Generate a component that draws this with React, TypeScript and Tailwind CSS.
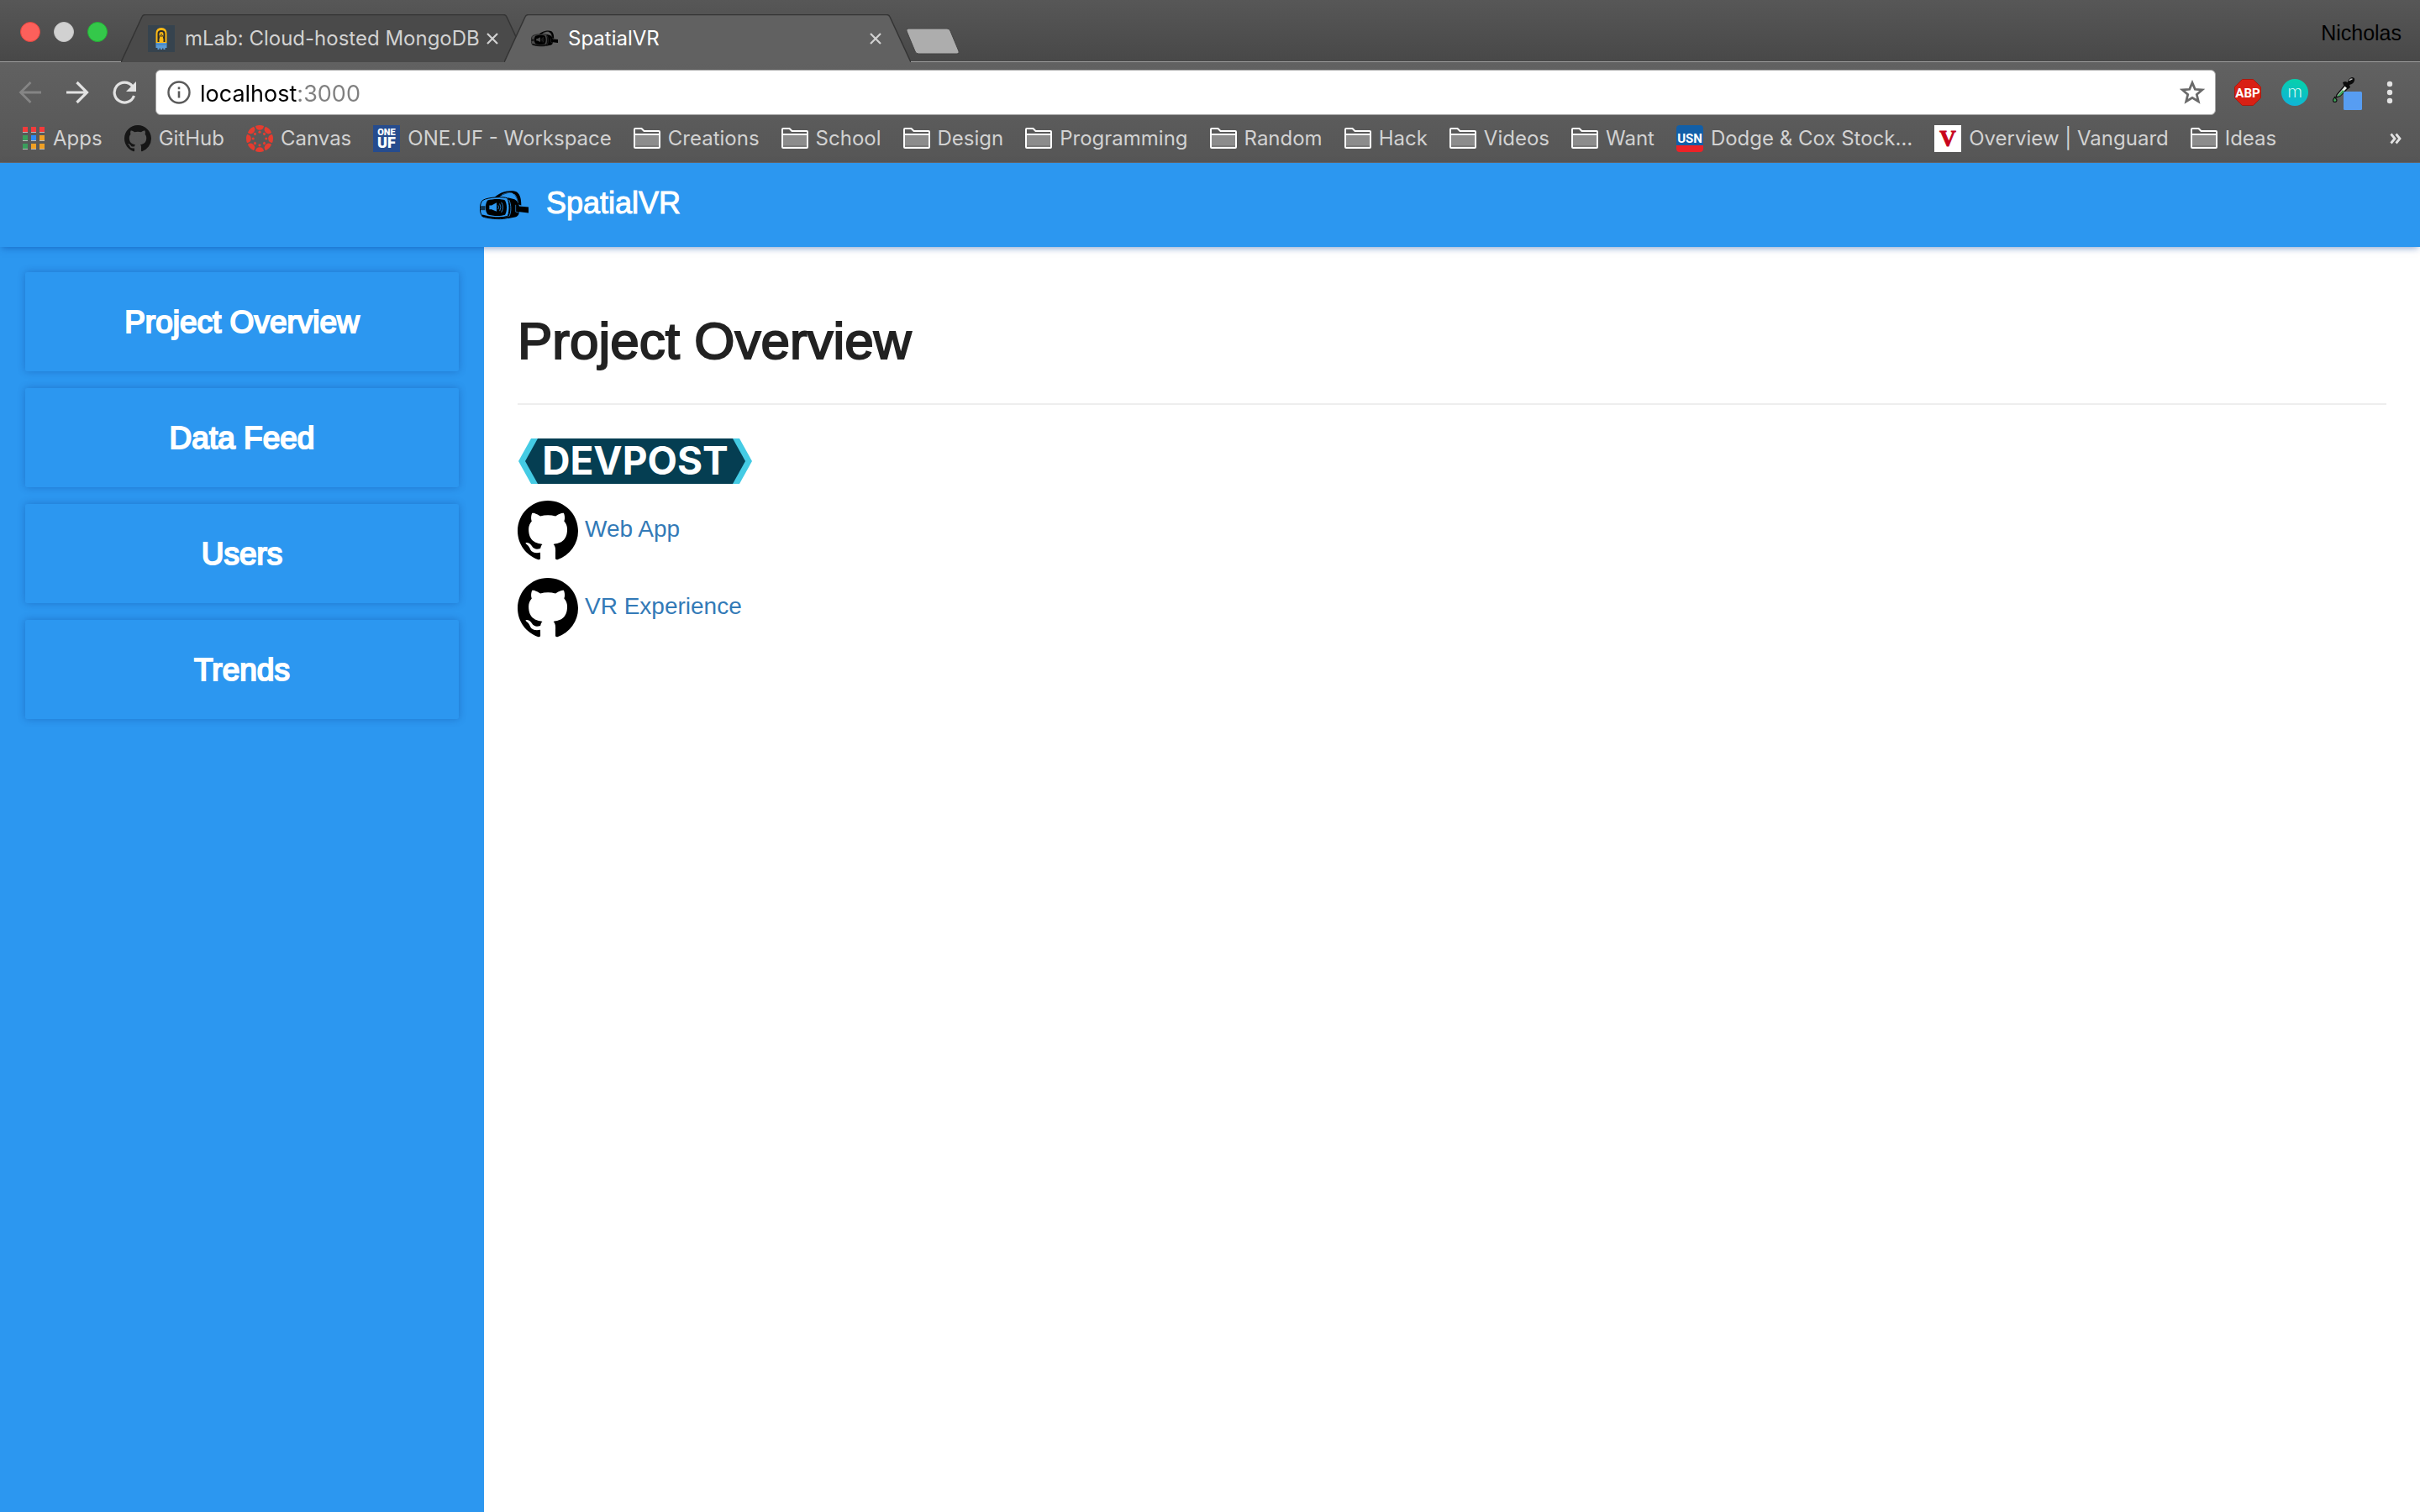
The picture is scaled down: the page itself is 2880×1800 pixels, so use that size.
import type { ReactNode } from "react";

type Bookmark = { label: string; icon?: ReactNode };

const barText = "font-['Inter',sans-serif] text-[24px] leading-8 text-[#d2d2d2]";

function GithubMark({ className }: { className: string }) {
  return (
    <svg viewBox="0 0 16 16" fill="currentColor" className={className} aria-hidden="true">
      <path d="M8 0C3.58 0 0 3.58 0 8c0 3.54 2.29 6.53 5.47 7.59.4.07.55-.17.55-.38 0-.19-.01-.82-.01-1.49-2.01.37-2.53-.49-2.69-.94-.09-.23-.48-.94-.82-1.13-.28-.15-.68-.52-.01-.53.63-.01 1.08.58 1.23.82.72 1.21 1.87.87 2.33.66.07-.52.28-.87.51-1.07-1.78-.2-3.64-.89-3.64-3.95 0-.87.31-1.59.82-2.15-.08-.2-.36-1.02.08-2.12 0 0 .67-.21 2.2.82.64-.18 1.32-.27 2-.27s1.36.09 2 .27c1.53-1.04 2.2-.82 2.2-.82.44 1.1.16 1.92.08 2.12.51.56.82 1.27.82 2.15 0 3.07-1.87 3.75-3.65 3.95.29.25.54.73.54 1.48 0 1.07-.01 1.93-.01 2.2 0 .21.15.46.55.38A8.01 8.01 0 0 0 16 8c0-4.42-3.58-8-8-8z" />
    </svg>
  );
}

function Headset({ className, lens }: { className: string; lens: string }) {
  return (
    <svg viewBox="0 0 174 104" className={className} aria-hidden="true">
      <path d="M50 27 C66 4 112 -6 132 4 C146 14 148 34 148 52 L137 48 C133 30 128 12 114 8 C98 5 80 14 64 25 Z" fill="#000" />
      <path d="M78 15 C92 6 108 5 118 10 M124 12 C131 20 134 30 137 44" fill="none" stroke={lens} strokeWidth="2" />
      <path d="M100 24 L124 30 C136 36 142 52 142 66 C142 84 136 92 126 94 L98 99 Z" fill="#000" />
      <path d="M130 54 L174 58 V79 L130 74 Z" fill="#000" />
      <path d="M128 50 V75 L146 80" fill="none" stroke={lens} strokeWidth="2" />
      <path d="M10 34 C30 22 84 20 98 26 C108 44 108 80 96 98 C70 104 24 98 10 92 C-2 80-2 46 10 34 Z" fill={lens} stroke="#000" strokeWidth="3" />
      <rect x="2" y="54" width="17" height="15" fill="#000" opacity="0.65" />
      <path d="M28 34 C48 28 78 28 90 34 C98 48 98 72 90 86 C72 92 44 90 28 84 C18 70 18 48 28 34 Z" fill="#000" />
      <path d="M8 88 C34 96 78 100 98 92" fill="none" stroke="#000" strokeWidth="6" />
      <path d="M104 32 C113 50 113 78 104 92" fill="none" stroke={lens} strokeWidth="2.5" />
      <path d="M34 52 H42 L60 42 V74 L42 66 H34 Z" fill={lens} />
      <path d="M65 52 Q70 58 65 66 M71 46 Q79 58 71 72 M77 41 Q88 58 77 77" fill="none" stroke={lens} strokeWidth="2.5" />
    </svg>
  );
}

function FolderIcon() {
  return (
    <svg viewBox="0 0 32 32" className="h-8 w-8 shrink-0" aria-hidden="true">
      <path d="M1 9 H31 V27 H1 Z" fill="#8c8c8c" />
      <path d="M1 24 H31 V27 H1 Z" fill="#7b7b7b" />
      <path d="M2 5 H9 L12 8 H30 V10 H2 Z" fill="#595959" />
      <path d="M1 11 V5 Q1 4 2 4 H9.5 L12.5 7 H30 Q31 7 31 8 V26 Q31 27 30 27 H2 Q1 27 1 26 Z" fill="none" stroke="#fff" strokeWidth="2" />
      <path d="M1 11 H31" stroke="#fff" strokeWidth="2" />
    </svg>
  );
}

function AppsIcon() {
  const colors = ["#f33b3b", "#f33b3b", "#f33b3b", "#3a9d5c", "#2f8bf5", "#f0a024", "#3a9d5c", "#f0a024", "#f0a024"];
  return (
    <svg viewBox="0 0 27 32" className="h-8 w-[27px] shrink-0" aria-hidden="true">
      {colors.map((fill, i) => (
        <g key={i}>
          <rect x={(i % 3) * 10} y={2 + Math.floor(i / 3) * 10} width="6" height="7" fill="#b9b9b9" />
          <rect x={(i % 3) * 10} y={2 + Math.floor(i / 3) * 10} width="6" height="6" fill={fill} />
        </g>
      ))}
    </svg>
  );
}

function CanvasIcon() {
  const spokes = [0, 45, 90, 135, 180, 225, 270, 315];
  return (
    <svg viewBox="0 0 32 32" className="h-8 w-8 shrink-0" fill="#e63c2f" aria-hidden="true">
      {spokes.map((deg) => (
        <g key={deg} transform={`rotate(${deg} 16 16)`}>
          <path d="M11 1 Q16 -1 21 1 Q20.500 5.800 16 5.800 Q11.500 5.800 11 1 Z" />
          <circle cx="16" cy="8.200" r="1.600" />
        </g>
      ))}
    </svg>
  );
}

function OneUfIcon() {
  return (
    <svg viewBox="0 0 32 32" className="h-8 w-8 shrink-0" fill="#fff" textAnchor="middle" aria-hidden="true">
      <rect width="32" height="32" fill="#264c8e" />
      <text x="16" y="12" fontFamily="Roboto, sans-serif" fontWeight="900" fontSize="11">ONE</text>
      <text x="16" y="27" fontFamily="Roboto, sans-serif" fontWeight="900" fontSize="18">UF</text>
    </svg>
  );
}

function UsnIcon() {
  return (
    <svg viewBox="0 0 32 32" className="h-8 w-8 shrink-0" aria-hidden="true">
      <path d="M4 0 H28 Q32 0 32 4 V24 H0 V4 Q0 0 4 0 Z" fill="#125fa8" />
      <path d="M0 24 H32 V28 Q32 32 28 32 H4 Q0 32 0 28 Z" fill="#ec2227" />
      <text x="16" y="21" fill="#fff" textAnchor="middle" fontFamily="Roboto, sans-serif" fontWeight="700" fontSize="15">USN</text>
    </svg>
  );
}

function VanguardIcon() {
  return (
    <svg viewBox="0 0 32 32" className="h-8 w-8 shrink-0" aria-hidden="true">
      <rect width="32" height="32" fill="#fff" />
      <text x="16" y="25" fill="#c8051c" stroke="#c8051c" textAnchor="middle" fontFamily="Liberation Serif, serif" fontWeight="700" fontSize="27">V</text>
    </svg>
  );
}

function MlabIcon() {
  return (
    <svg viewBox="0 0 32 32" className="h-8 w-8 shrink-0" aria-hidden="true">
      <rect width="32" height="32" fill="#36434e" />
      <path d="M9.500 21 V10 Q9.500 3 16 3 Q22.500 3 22.500 10 V21 Z" fill="#fdb913" />
      <path d="M12.500 20 V10 Q12.500 7 16 7 Q19.500 7 19.500 10 V20" fill="none" stroke="#24282c" strokeWidth="2" />
      <path d="M16 10 V14 M14.500 12 L13 16 M17.500 12 L19 16" stroke="#24282c" strokeWidth="1" />
      <path d="M9.500 21 H22.500 V27 H20.500 V29 H18.500 V27.500 H17 V29 H15 V27.500 H13.500 V29 H11.500 V27 H9.500 Z" fill="#5b9bd5" />
      <path d="M9.500 23 H22.500" stroke="#3e7cb8" strokeWidth="1" />
    </svg>
  );
}

function Dropper() {
  return (
    <svg viewBox="0 0 36 42" className="h-[42px] w-9" aria-hidden="true">
      <path d="M5 22 L15 10 L19 13 L9 23 L4 25 Z" fill="#e9eee9" stroke="#111" strokeWidth="1.500" />
      <path d="M5 24 L12 16 L14 18 L9 23 Z" fill="#3fa35a" />
      <path d="M12 7 L15 6 L18 7 Q19 2 23 1 Q27 1 26 5 Q25 9 20 10 L21 13 L18 15 L16 13 L13 10 Z" fill="#0c0c0c" />
      <path d="M20 5 Q21 3 23.500 3" stroke="#bbb" strokeWidth="1.500" fill="none" />
      <path d="M2.500 24.500 L5 28 Q5 30.500 2.500 30.500 Q.500 30.500 .500 28 Z" fill="#3fa35a" stroke="#111" strokeWidth="1.200" />
      <rect x="13" y="18" width="22" height="22" rx="1.500" fill="#579df2" />
    </svg>
  );
}

const bookmarks: Bookmark[] = [
  { label: "Apps", icon: <AppsIcon /> },
  { label: "GitHub", icon: <GithubMark className="h-8 w-8 shrink-0 text-[#161616]" /> },
  { label: "Canvas", icon: <CanvasIcon /> },
  { label: "ONE.UF - Workspace", icon: <OneUfIcon /> },
  { label: "Creations" },
  { label: "School" },
  { label: "Design" },
  { label: "Programming" },
  { label: "Random" },
  { label: "Hack" },
  { label: "Videos" },
  { label: "Want" },
  { label: "Dodge & Cox Stock…", icon: <UsnIcon /> },
  { label: "Overview | Vanguard", icon: <VanguardIcon /> },
  { label: "Ideas" },
];

const sections = ["Project Overview", "Data Feed", "Users", "Trends"];

function Tab({ title, icon, active }: { title: string; icon: ReactNode; active?: boolean }) {
  return (
    <div className={active ? "relative z-10 -ml-7 h-[57px] w-[484px]" : "relative h-14 w-[484px]"}>
      <svg viewBox="0 0 484 57" className="absolute top-0 left-0 h-[57px] w-full" aria-hidden="true">
        <path d="M0 57 L25 3 Q26 .5 29 .5 H455 Q458 .5 459 3 L484 57 Z" fill={active ? "#616161" : "#4a4a4a"} />
        <path d="M0 57 L25 3 Q26 .5 29 .5 H455 Q458 .5 459 3 L484 57" fill="none" stroke="#343434" strokeWidth="1.5" />
      </svg>
      <div className="relative flex h-[57px] items-center pr-[35px] pl-8">
        <button
          type="button"
          className={[
            "flex min-w-0 flex-1 items-center gap-3 text-left font-['Inter',sans-serif] text-[24px] leading-8 whitespace-nowrap",
            active ? "text-white" : "text-[#d2d2d2]",
          ].join(" ")}
        >
          {icon}
          {title}
        </button>
        <button type="button" aria-label="Close tab">
          <svg viewBox="0 0 14 14" className="h-[14px] w-[14px]" aria-hidden="true">
            <path d="M1 1 L13 13 M13 1 L1 13" stroke="#d2d2d2" strokeWidth="2.2" />
          </svg>
        </button>
      </div>
    </div>
  );
}

function TabStrip() {
  return (
    <div className="flex h-[74px] items-end justify-between border-b border-[#9c9c9c] bg-linear-to-b from-[#575757] to-[#484848]">
      <div className="flex h-14 items-start">
        <div className="flex w-36 gap-4 pt-[9px] pl-6">
          <button type="button" aria-label="Close window" className="h-6 w-6 rounded-full border border-[#e2463f] bg-[#fc605b]" />
          <button type="button" aria-label="Minimize window" className="h-6 w-6 rounded-full border border-[#c4c4c4] bg-[#d1d1d1]" />
          <button type="button" aria-label="Zoom window" className="h-6 w-6 rounded-full border border-[#24b034] bg-[#34c84a]" />
        </div>
        <Tab title="mLab: Cloud-hosted MongoDB" icon={<MlabIcon />} />
        <Tab title="SpatialVR" icon={<Headset className="h-8 w-8 shrink-0" lens="#4a4a4a" />} active />
        <button type="button" aria-label="New tab" className="-ml-2 pt-4">
          <svg viewBox="0 0 68 32" className="h-8 w-[68px]" aria-hidden="true">
            <path d="M5 1 H51 Q54 1 55 4 L65 28 Q66 31 63 31 H17 Q14 31 13 28 L3 4 Q2 1 5 1 Z" fill="#adadad" stroke="#444" strokeWidth="1" />
          </svg>
        </button>
      </div>
      <div className="pr-[22px] pb-4 font-['Liberation_Sans',sans-serif] text-[25px] leading-9 text-black">Nicholas</div>
    </div>
  );
}

function Toolbar() {
  return (
    <div className="flex items-center pt-[9px] pr-8 pl-[22px] text-[#e2e2e2]">
      <div className="flex w-[163px] shrink-0 items-center gap-7">
        <button type="button" aria-label="Back" className="text-[#858585]">
          <svg viewBox="0 0 28 28" className="h-7 w-7" fill="none" stroke="currentColor" strokeWidth="2.800" aria-hidden="true">
            <path d="M27 14 H3 M14.500 2 L2.500 14 L14.500 26" />
          </svg>
        </button>
        <button type="button" aria-label="Forward">
          <svg viewBox="0 0 28 28" className="h-7 w-7" fill="none" stroke="currentColor" strokeWidth="3.200" aria-hidden="true">
            <path d="M1 14 H25 M13.500 2 L25.500 14 L13.500 26" />
          </svg>
        </button>
        <button type="button" aria-label="Reload">
          <svg viewBox="0 0 28 28" className="h-7 w-7" aria-hidden="true">
            <path d="M23.500 6.500 A12 12 0 1 0 25.500 18" fill="none" stroke="currentColor" strokeWidth="3.2" />
            <path d="M28 1 V13 H16 Z" fill="currentColor" />
          </svg>
        </button>
      </div>
      <div className="flex h-[54px] min-w-0 flex-1 items-center rounded-md border border-[#a5a5a5] bg-white pr-3 pl-[13px]">
        <svg viewBox="0 0 28 28" className="h-7 w-7 shrink-0" aria-hidden="true">
          <circle cx="14" cy="14" r="12.500" fill="none" stroke="#5a5a5a" strokeWidth="2.4" />
          <path d="M14 12.500 V20.500 M14 7.500 V10.200" stroke="#5a5a5a" strokeWidth="2.6" />
        </svg>
        <input
          type="text"
          aria-label="Address"
          defaultValue="localhost:3000"
          className="ml-[11px] h-11 min-w-0 flex-1 bg-[linear-gradient(90deg,#000_116px,#808080_116px)] bg-clip-text pt-[2px] font-['Inter',sans-serif] text-[27px] text-transparent outline-none"
        />
        <button type="button" aria-label="Bookmark this page">
          <svg viewBox="0 0 30 30" className="h-[30px] w-[30px]" aria-hidden="true">
            <path d="M15 3.500 L18.300 11.300 L26.700 12 L20.300 17.500 L22.300 25.800 L15 21.300 L7.700 25.800 L9.700 17.500 L3.300 12 L11.700 11.300 Z" fill="none" stroke="#6a6a6a" strokeWidth="2.8" />
          </svg>
        </button>
      </div>
      <div className="flex shrink-0 items-center pl-[22px]">
        <button type="button" aria-label="Adblock Plus">
          <svg viewBox="0 0 32 32" className="h-8 w-8" aria-hidden="true">
            <path d="M9.500 .5 H22.500 L31.500 9.500 V22.500 L22.500 31.500 H9.500 L.5 22.500 V9.500 Z" fill="#d92014" stroke="#a8190f" />
            <text x="16" y="21.500" fill="#fff" textAnchor="middle" fontFamily="Roboto, sans-serif" fontWeight="700" fontSize="15">ABP</text>
          </svg>
        </button>
        <button type="button" aria-label="Momentum" className="ml-6">
          <svg viewBox="0 0 32 32" className="h-8 w-8" aria-hidden="true">
            <linearGradient id="teal" x1="0" y1="1" x2="0.3" y2="0">
              <stop offset="0" stopColor="#12b0dc" />
              <stop offset="1" stopColor="#06cfae" />
            </linearGradient>
            <circle cx="16" cy="16" r="16" fill="url(#teal)" />
            <text x="16" y="22" fill="#e4fbf8" textAnchor="middle" fontFamily="Lato, sans-serif" fontWeight="300" fontSize="22">m</text>
          </svg>
        </button>
        <button type="button" aria-label="Color picker" className="ml-[29px] pt-1">
          <Dropper />
        </button>
        <button type="button" aria-label="Menu" className="ml-7">
          <svg viewBox="0 0 8 28" className="h-7 w-2" fill="#e2e2e2" aria-hidden="true">
            <circle cx="4" cy="4" r="3.2" />
            <circle cx="4" cy="14" r="3.2" />
            <circle cx="4" cy="24" r="3.2" />
          </svg>
        </button>
      </div>
    </div>
  );
}

function BookmarksBar() {
  return (
    <nav aria-label="Bookmarks" className="flex items-center pt-3 pr-[22px] pb-3 pl-[27px]">
      <ul className="flex min-w-0 flex-1 gap-[26px]">
        {bookmarks.map(({ label, icon }) => (
          <li key={label}>
            <a href="#" className={`flex items-center gap-[9px] whitespace-nowrap ${barText}`}>
              {icon ?? <FolderIcon />}
              {label}
            </a>
          </li>
        ))}
      </ul>
      <button type="button" aria-label="More bookmarks">
        <svg viewBox="0 0 14 14" className="h-[14px] w-[14px]" fill="none" stroke="#e2e2e2" strokeWidth="2.8" aria-hidden="true">
          <path d="M1.500 1.500 L6 7 L1.500 12.500 M7.500 1.500 L12 7 L7.500 12.500" />
        </svg>
      </button>
    </nav>
  );
}

function DevpostBadge() {
  return (
    <svg viewBox="0 0 280 54" className="h-[54px] w-[280px] overflow-visible" role="img" aria-label="Devpost">
      <path d="M16 0 H264 L279 27 L264 54 H16 L1 27 Z" fill="#44cbe4" />
      <path d="M24 0 H256 L271 27 L256 54 H24 L9 27 Z" fill="#053e52" />
      <text x="140" y="43" fill="#fff" textAnchor="middle" fontFamily="Inter, sans-serif" fontWeight="700" fontSize="46">DEVPOST</text>
    </svg>
  );
}

function RepoLink({ label }: { label: string }) {
  return (
    <a href="#" className="flex items-center gap-2 text-[28px] text-[#337ab7]">
      <GithubMark className="h-[72px] w-[72px] text-black" />
      <span className="pb-1 leading-10">{label}</span>
    </a>
  );
}

export default function App() {
  return (
    <div className="flex min-h-screen flex-col bg-white font-['Liberation_Sans',Arial,sans-serif]">
      <div>
        <TabStrip />
        <div className="border-b border-[#666] bg-linear-to-b from-[#616161] to-[#565656]">
          <Toolbar />
          <BookmarksBar />
        </div>
      </div>

      <header className="relative z-10 flex h-[100px] items-center bg-[#2c97f0] pl-[calc(20%-5px)] shadow-[0_3px_8px_-2px_rgba(0,60,150,0.5)]">
        <a href="#" className="flex items-center gap-[21px] text-[36px] leading-10 text-white">
          <Headset className="h-[35px] w-[58px]" lens="#2c97f0" />
          <span className="pb-1 [-webkit-text-stroke:1px_white]">SpatialVR</span>
        </a>
      </header>

      <div className="flex flex-1">
        <aside className="flex w-1/5 flex-col gap-5 bg-[#2c97f0] p-[30px]">
          {sections.map((name) => (
            <button
              key={name}
              type="button"
              className="h-[118px] w-full rounded-xs pt-[2px] text-[37px] leading-10 text-white shadow-[0_0_10px_rgba(0,40,120,0.3)] [-webkit-text-stroke:2px_white]"
            >
              {name}
            </button>
          ))}
        </aside>

        <main className="flex-1 px-10 pt-[78px]">
          <h1 className="text-[62px] leading-[68px] text-[#222] [-webkit-text-stroke:2px_#222]">Project Overview</h1>
          <hr className="mt-10 border-t-2 border-[#eee]" />
          <div className="mt-10 flex flex-col items-start gap-5">
            <a href="#">
              <DevpostBadge />
            </a>
            <RepoLink label="Web App" />
            <RepoLink label="VR Experience" />
          </div>
        </main>
      </div>
    </div>
  );
}
